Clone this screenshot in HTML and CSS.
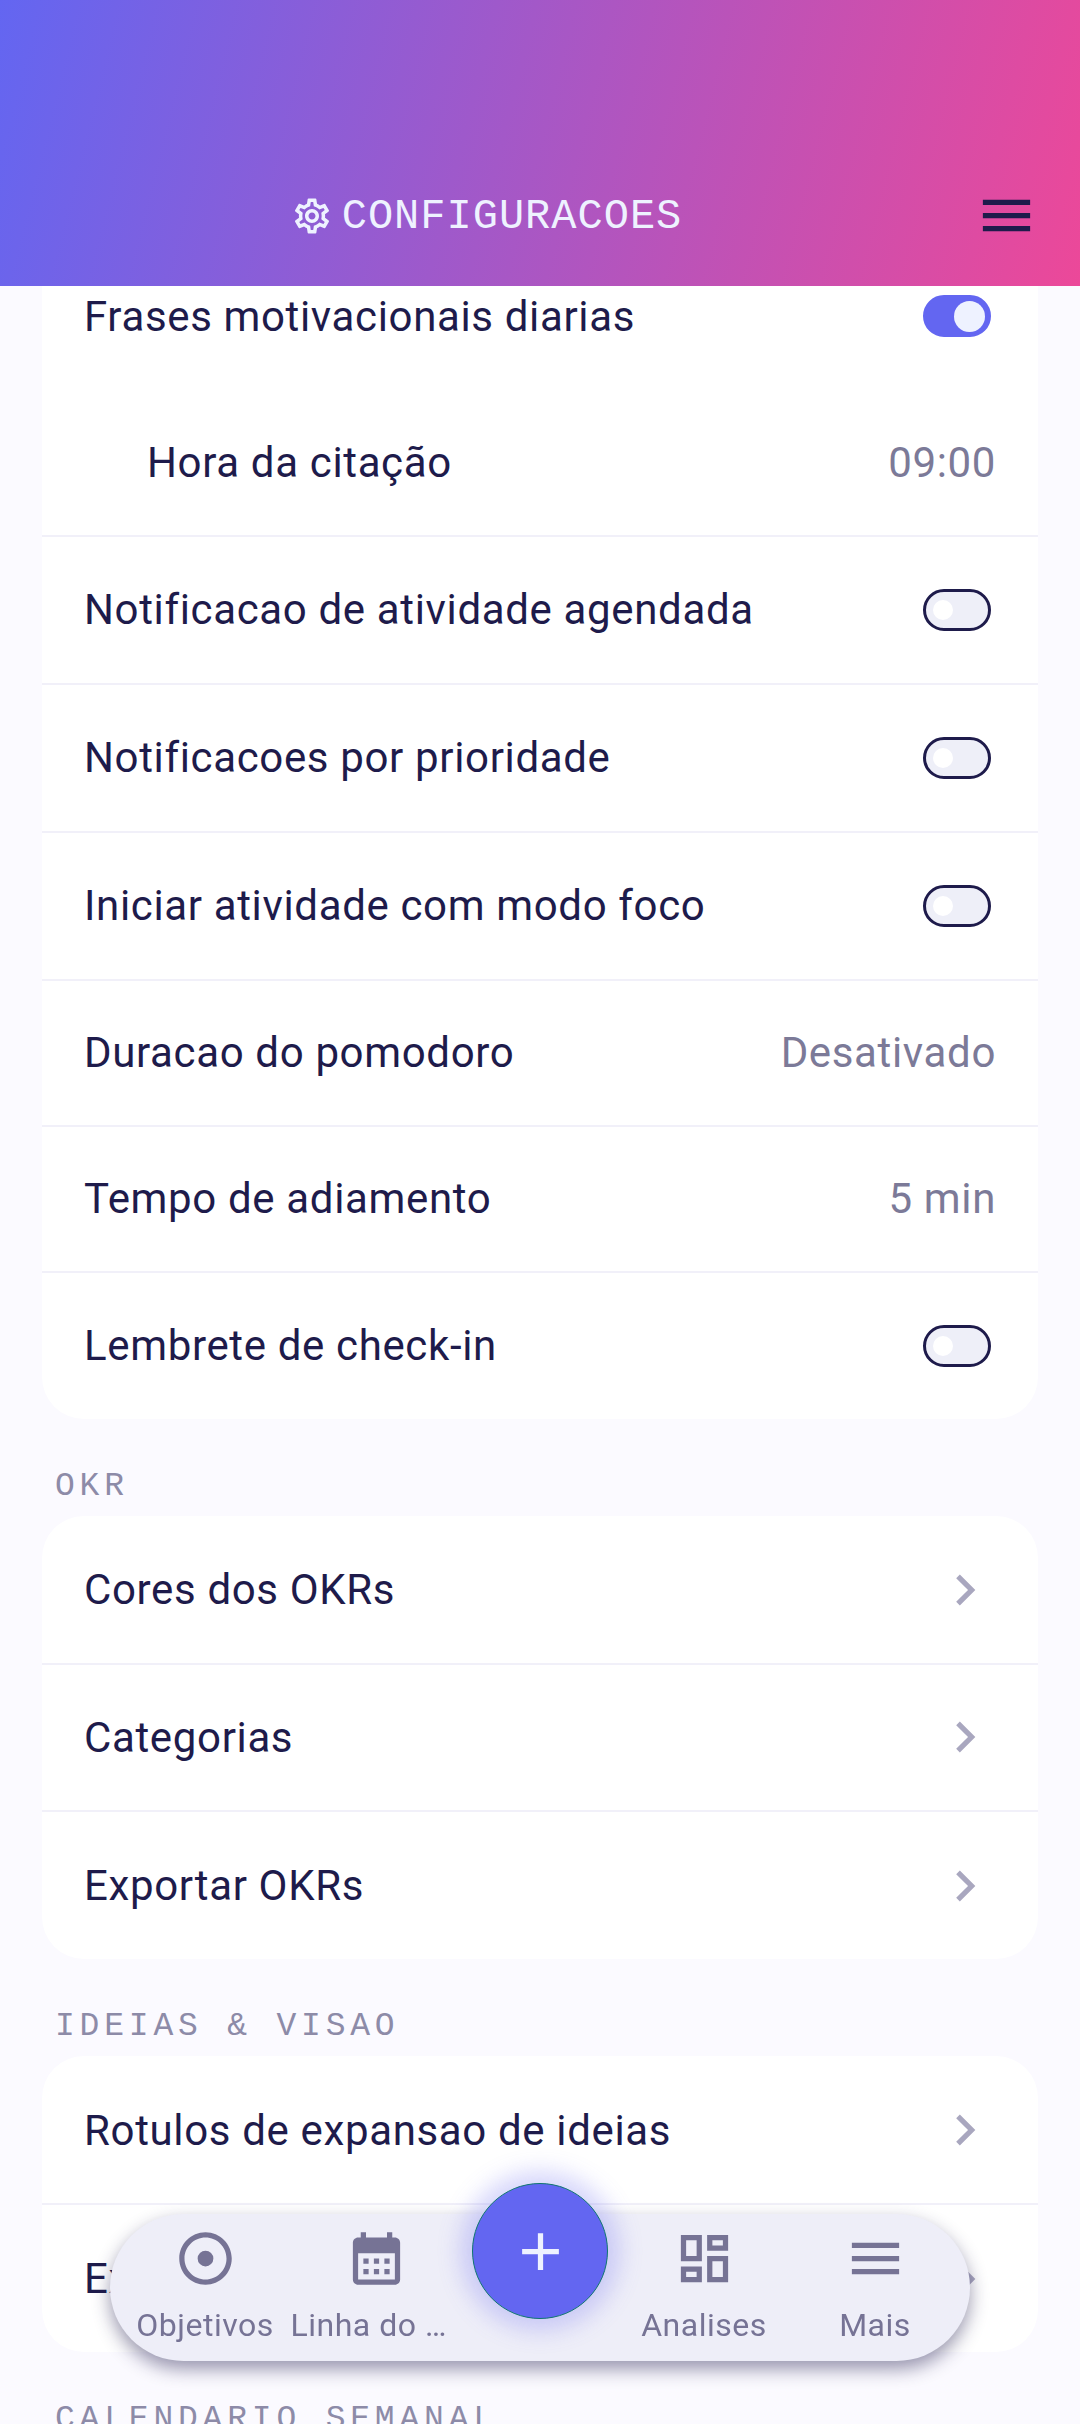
FILE: index.html
```html
<!DOCTYPE html>
<html lang="pt-br">
<head>
  <meta charset="UTF-8">
  <title>Configuracoes</title>
  <link rel="stylesheet" href="styles.css">
</head>
<body>
  <header class="topbar">
    <div class="topbar-title">
      <svg class="gear" viewBox="0 0 24 24"><path d="M19.43 12.98c.04-.32.07-.64.07-.98 0-.34-.03-.66-.07-.98l2.11-1.65c.19-.15.24-.42.12-.64l-2-3.46c-.09-.16-.26-.25-.44-.25-.06 0-.12.01-.17.03l-2.49 1c-.52-.4-1.08-.73-1.69-.98l-.38-2.65C14.46 2.18 14.25 2 14 2h-4c-.25 0-.46.18-.49.42l-.38 2.65c-.61.25-1.17.59-1.69.98l-2.49-1c-.06-.02-.12-.03-.18-.03-.17 0-.34.09-.43.25l-2 3.46c-.13.22-.07.49.12.64l2.11 1.65c-.04.32-.07.65-.07.98 0 .33.03.66.07.98l-2.11 1.65c-.19.15-.24.42-.12.64l2 3.46c.09.16.26.25.44.25.06 0 .12-.01.17-.03l2.49-1c.52.4 1.08.73 1.69.98l.38 2.65c.03.24.24.42.49.42h4c.25 0 .46-.18.49-.42l.38-2.65c.61-.25 1.17-.59 1.69-.98l2.49 1c.06.02.12.03.18.03.17 0 .34-.09.43-.25l2-3.46c.12-.22.07-.49-.12-.64l-2.11-1.65zm-1.98-1.71c.04.31.05.52.05.73 0 .21-.02.43-.05.73l-.14 1.13.89.7 1.08.84-.7 1.21-1.27-.51-1.04-.42-.9.68c-.43.32-.84.56-1.25.73l-1.06.43-.16 1.13-.2 1.35h-1.4l-.19-1.35-.16-1.13-1.06-.43c-.43-.18-.83-.41-1.23-.71l-.91-.7-1.06.43-1.27.51-.7-1.21 1.08-.84.89-.7-.14-1.13c-.03-.31-.05-.54-.05-.74s.02-.43.05-.73l.14-1.13-.89-.7-1.08-.84.7-1.21 1.27.51 1.04.42.9-.68c.43-.32.84-.56 1.25-.73l1.06-.43.16-1.13.2-1.35h1.39l.19 1.35.16 1.13 1.06.43c.43.18.83.41 1.23.71l.91.7 1.06-.43 1.27-.51.7 1.21-1.07.85-.89.7.14 1.13zM12 8c-2.21 0-4 1.79-4 4s1.79 4 4 4 4-1.79 4-4-1.79-4-4-4zm0 6c-1.1 0-2-.9-2-2s.9-2 2-2 2 .9 2 2-.9 2-2 2z"/></svg>
      <span>CONFIGURACOES</span>
    </div>
    <svg class="topbar-menu" viewBox="0 0 24 24"><path d="M3 18h18v-2H3v2zm0-5h18v-2H3v2zm0-7v2h18V6H3z"/></svg>
  </header>

  <main class="content">
    <section class="card">
      <div class="row">
        <span>Frases motivacionais diarias</span>
        <span class="switch on"></span>
      </div>
      <div class="row sub line">
        <span>Hora da citação</span>
        <span class="value">09:00</span>
      </div>
      <div class="row tall line">
        <span>Notificacao de atividade agendada</span>
        <span class="switch"></span>
      </div>
      <div class="row tall line">
        <span>Notificacoes por prioridade</span>
        <span class="switch"></span>
      </div>
      <div class="row tall line">
        <span>Iniciar atividade com modo foco</span>
        <span class="switch"></span>
      </div>
      <div class="row short line">
        <span>Duracao do pomodoro</span>
        <span class="value">Desativado</span>
      </div>
      <div class="row short line">
        <span>Tempo de adiamento</span>
        <span class="value">5 min</span>
      </div>
      <div class="row tall">
        <span>Lembrete de check-in</span>
        <span class="switch"></span>
      </div>
    </section>

    <h2 class="section-title">OKR</h2>
    <section class="card">
      <div class="row link line">
        <span>Cores dos OKRs</span>
        <svg class="chevron" viewBox="0 0 24 24"><path d="M10 6L8.59 7.41 13.17 12l-4.58 4.59L10 18l6-6z"/></svg>
      </div>
      <div class="row link line">
        <span>Categorias</span>
        <svg class="chevron" viewBox="0 0 24 24"><path d="M10 6L8.59 7.41 13.17 12l-4.58 4.59L10 18l6-6z"/></svg>
      </div>
      <div class="row link">
        <span>Exportar OKRs</span>
        <svg class="chevron" viewBox="0 0 24 24"><path d="M10 6L8.59 7.41 13.17 12l-4.58 4.59L10 18l6-6z"/></svg>
      </div>
    </section>

    <h2 class="section-title">IDEIAS &amp; VISAO</h2>
    <section class="card">
      <div class="row link line">
        <span>Rotulos de expansao de ideias</span>
        <svg class="chevron" viewBox="0 0 24 24"><path d="M10 6L8.59 7.41 13.17 12l-4.58 4.59L10 18l6-6z"/></svg>
      </div>
      <div class="row link">
        <span>Exportar ideias</span>
        <svg class="chevron" viewBox="0 0 24 24"><path d="M10 6L8.59 7.41 13.17 12l-4.58 4.59L10 18l6-6z"/></svg>
      </div>
    </section>

    <h2 class="section-title">CALENDARIO SEMANAL</h2>
  </main>

  <nav class="bottom-nav">
    <div class="nav-item">
      <svg viewBox="0 0 24 24"><path d="M12 9a3 3 0 1 0 0 6 3 3 0 0 0 0-6zm0-7C6.48 2 2 6.48 2 12s4.48 10 10 10 10-4.48 10-10S17.52 2 12 2zm0 18c-4.42 0-8-3.58-8-8s3.58-8 8-8 8 3.58 8 8-3.58 8-8 8z"/></svg>
      <span>Objetivos</span>
    </div>
    <div class="nav-item cut">
      <svg viewBox="0 0 24 24"><path d="M19 4h-1V2h-2v2H8V2H6v2H5c-1.1 0-2 .9-2 2v14c0 1.1.9 2 2 2h14c1.1 0 2-.9 2-2V6c0-1.1-.9-2-2-2zm0 16H5V10h14v10zM9 14H7v-2h2v2zm4 0h-2v-2h2v2zm4 0h-2v-2h2v2zm-8 4H7v-2h2v2zm4 0h-2v-2h2v2zm4 0h-2v-2h2v2z"/></svg>
      <span>Linha do …</span>
    </div>
    <div class="nav-gap"></div>
    <div class="nav-item">
      <svg viewBox="0 0 24 24"><path d="M19 5v2h-4V5h4M9 5v6H5V5h4m10 8v6h-4v-6h4M9 17v2H5v-2h4M21 3h-8v6h8V3zM11 3H3v10h8V3zm10 8h-8v10h8V11zm-10 4H3v6h8v-6z"/></svg>
      <span>Analises</span>
    </div>
    <div class="nav-item">
      <svg viewBox="0 0 24 24"><path d="M3 18h18v-2H3v2zm0-5h18v-2H3v2zm0-7v2h18V6H3z"/></svg>
      <span>Mais</span>
    </div>
    <button class="fab">
      <svg viewBox="0 0 24 24"><path d="M19 13h-6v6h-2v-6H5v-2h6V5h2v6h6v2z"/></svg>
    </button>
  </nav>
</body>
</html>
```

FILE: styles.css
```css
html, body { height: 100%; }
body {
  margin: 0;
  background: #fbfaff;
  font-family: Roboto, sans-serif;
  color: #1e1b4b;
  overflow: hidden;
  position: relative;
}

/* topo */
.topbar {
  position: relative;
  z-index: 2;
  height: 286px;
  box-sizing: border-box;
  padding-bottom: 39px;
  padding-right: 42px;
  display: flex;
  align-items: flex-end;
  background: linear-gradient(104deg, #6366f1, #ec4899);
}
.topbar-title {
  flex: 1;
  height: 63px;
  display: flex;
  align-items: center;
  justify-content: center;
  gap: 9px;
  color: #eef2ff;
  font-family: "Liberation Mono", monospace;
  font-size: 42px;
  letter-spacing: 1px;
}
.topbar-title span { padding-top: 3px; }
.gear { width: 42px; height: 42px; margin-left: -2px; fill: #eef2ff; }
.topbar-menu { width: 63px; height: 63px; fill: #1e1b4b; }

/* lista */
.content { margin-top: -45px; padding: 0 42px; }
.card { padding-top: 1.5px; background: #fff; border-radius: 42px; overflow: hidden; }
.row {
  height: 147px;
  box-sizing: border-box;
  padding: 0 42px;
  display: flex;
  align-items: center;
  justify-content: space-between;
  font-size: 42px;
  letter-spacing: 0.65px;
}
.row.tall { height: 148px; }
.row.short { height: 146px; }
.row.link { height: 147.5px; }
.row.sub { padding-left: 105px; }
.row.tall:last-child { height: 146px; }
.row.link:last-child { height: 147px; }
.line { border-bottom: 2px solid #f1f0f9; }
.value { color: #7c7a98; }
.chevron { width: 62px; height: 62px; fill: #a9a7bf; }

.switch {
  width: 68px;
  height: 42px;
  box-sizing: border-box;
  margin-right: 5px;
  border: 3px solid #1e1b4b;
  border-radius: 21px;
  background: #eeeff8;
  display: flex;
  align-items: center;
  padding-left: 7px;
}
.switch::after {
  content: "";
  width: 20px;
  height: 20px;
  border-radius: 50%;
  background: #fff;
}
.switch.on {
  border-color: #6366f1;
  background: #6366f1;
  padding-left: 28px;
}
.switch.on::after { width: 31px; height: 31px; background: #eef2ff; flex: none; }

.section-title {
  margin: 0;
  height: 97px;
  box-sizing: border-box;
  padding: 49px 0 0 13px;
  font-family: "Liberation Mono", monospace;
  font-weight: normal;
  font-size: 33px;
  line-height: 38px;
  letter-spacing: 4.8px;
  color: #8d8ba8;
}

/* barra inferior */
.bottom-nav {
  position: fixed;
  left: 110px;
  bottom: 63px;
  z-index: 3;
  width: 860px;
  height: 147px;
  box-sizing: border-box;
  padding: 13px 9.5px 0;
  display: grid;
  grid-template-columns: 171px 171px 1fr 171px 171px;
  background: #eeeef8;
  border-radius: 74px;
  box-shadow: 0 8px 18px rgba(30, 27, 75, 0.45);
}
.nav-item {
  display: flex;
  flex-direction: column;
  align-items: center;
  color: #767395;
  font-size: 32px;
  letter-spacing: 0.5px;
}
.nav-item svg { width: 63px; height: 63px; fill: #767395; }
.nav-item span { margin-top: 17px; white-space: nowrap; line-height: 36px; }
.nav-item.cut span { align-self: flex-start; }
.fab {
  position: absolute;
  left: 362px;
  top: -31px;
  width: 136px;
  height: 136px;
  padding: 0;
  border: 1px solid #0f766e;
  border-radius: 50%;
  background: #6366f1;
  box-shadow: 0 0 22px 12px rgba(99, 102, 241, 0.26);
  display: flex;
  align-items: center;
  justify-content: center;
}
.fab svg { width: 63px; height: 63px; fill: #eef2ff; }
```
